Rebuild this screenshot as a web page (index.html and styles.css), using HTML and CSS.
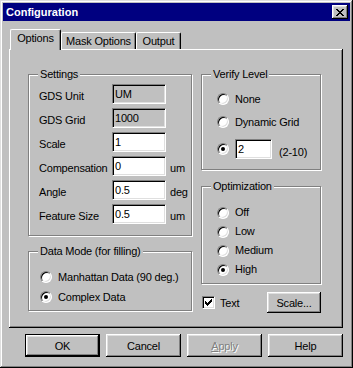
FILE: index.html
```html
<!DOCTYPE html>
<html lang="en">
<head>
<meta charset="UTF-8">
<title>Configuration</title>
<link rel="stylesheet" href="styles.css">
</head>
<body>
  <div class="window">
    <div class="titlebar">
      <span class="title">Configuration</span>
      <button class="close-btn" aria-label="Close">
        <svg width="8" height="7" viewBox="0 0 8 7"><path d="M0 0h2v1H0zM6 0h2v1H6zM1 1h2v1H1zM5 1h2v1H5zM2 2h4v1H2zM3 3h2v1H3zM2 4h4v1H2zM1 5h2v1H1zM5 5h2v1H5zM0 6h2v1H0zM6 6h2v1H6z" fill="#000"/></svg>
      </button>
    </div>

    <ul class="tabs">
      <li class="tab active tab-options">Options</li>
      <li class="tab tab-mask">Mask Options</li>
      <li class="tab tab-output">Output</li>
    </ul>

    <div class="panel">
      <div class="col-left">
        <div class="group settings">
          <div class="group-title">Settings</div>
          <div class="field-rows">
            <span class="label">GDS Unit</span><span class="edit readonly">UM</span><span></span>
            <span class="label">GDS Grid</span><span class="edit readonly">1000</span><span></span>
            <span class="label">Scale</span><span class="edit">1</span><span></span>
            <span class="label">Compensation</span><span class="edit">0</span><span class="unit">um</span>
            <span class="label">Angle</span><span class="edit">0.5</span><span class="unit">deg</span>
            <span class="label">Feature Size</span><span class="edit">0.5</span><span class="unit">um</span>
          </div>
        </div>

        <div class="group datamode">
          <div class="group-title">Data Mode (for filling)</div>
          <div class="radio-list mode-list">
            <div class="radio-row"><span class="radio"></span>Manhattan Data (90 deg.)</div>
            <div class="radio-row"><span class="radio checked"></span>Complex Data</div>
          </div>
        </div>
      </div>

      <div class="col-right">
        <div class="group verify">
          <div class="group-title">Verify Level</div>
          <div class="radio-list verify-list">
            <div class="radio-row"><span class="radio"></span>None</div>
            <div class="radio-row"><span class="radio"></span>Dynamic Grid</div>
            <div class="radio-row spin-row">
              <span class="radio checked"></span>
              <span class="edit level-edit">2</span>
              <span class="hint">(2-10)</span>
            </div>
          </div>
        </div>

        <div class="group optim">
          <div class="group-title">Optimization</div>
          <div class="radio-list opt-list">
            <div class="radio-row"><span class="radio"></span>Off</div>
            <div class="radio-row"><span class="radio"></span>Low</div>
            <div class="radio-row"><span class="radio"></span>Medium</div>
            <div class="radio-row"><span class="radio checked"></span>High</div>
          </div>
        </div>

        <div class="extras">
          <span class="checkbox">
            <svg width="7" height="7" viewBox="0 0 7 7"><path d="M6 0h1v1H6zM5 1h2v1H5zM0 2h1v1H0zM4 2h3v1H4zM0 3h2v1H0zM3 3h3v1H3zM0 4h5v1H0zM1 5h3v1H1zM2 6h1v1H2z" fill="#000"/></svg>
          </span>
          <span class="check-label">Text</span>
          <button class="btn scale-btn">Scale...</button>
        </div>
      </div>
    </div>

    <div class="buttons">
      <button class="btn default">OK</button>
      <button class="btn">Cancel</button>
      <button class="btn disabled"><span class="u">A</span>pply</button>
      <button class="btn">Help</button>
    </div>
  </div>
</body>
</html>
```

FILE: styles.css
```css
* {
  margin: 0;
  padding: 0;
  box-sizing: border-box;
}

body {
  background-color: #c0c0c0;
  font-family: "Liberation Sans", Arial, sans-serif;
  font-size: 11px;
  letter-spacing: -0.2px;
  color: #000;
}

.window {
  width: 353px;
  height: 368px;
  padding: 3px;
  background-color: #c0c0c0;
  box-shadow: inset -1px -1px 0 #000, inset 1px 1px 0 #dfdfdf, inset -2px -2px 0 #808080, inset 2px 2px 0 #fff;
}

/* title bar */

.titlebar {
  height: 18px;
  background-color: #000080;
  color: #fff;
  display: flex;
  align-items: center;
  justify-content: space-between;
  padding: 0 2px 0 3px;
}

.title {
  font-weight: bold;
  letter-spacing: 0;
}

.close-btn {
  width: 16px;
  height: 14px;
  border: none;
  background-color: #c0c0c0;
  display: flex;
  align-items: center;
  justify-content: center;
  box-shadow: inset -1px -1px 0 #000, inset 1px 1px 0 #fff, inset -2px -2px 0 #808080, inset 2px 2px 0 #dfdfdf;
}

.close-btn svg {
  display: block;
}

/* tabs */

.tabs {
  list-style: none;
  display: flex;
  align-items: flex-end;
  height: 20px;
  margin: 8px 0 0 7px;
  position: relative;
  z-index: 1;
}

.tab {
  height: 17px;
  padding-top: 2px;
  line-height: 13px;
  text-align: center;
  background-color: #c0c0c0;
  border-top: 1px solid #fff;
  border-left: 1px solid #fff;
  border-right: 1px solid #000;
  border-radius: 2px 2px 0 0;
  box-shadow: inset -1px 0 0 #808080;
}

.tab.active {
  height: 21px;
  margin-bottom: -1px;
}

.tab-options { width: 51px; }
.tab-mask { width: 75px; }
.tab-output { width: 45px; }

.panel {
  margin-left: 6px;
  width: 334px;
  height: 279px;
  padding: 25px 0 0 19px;
  display: flex;
  gap: 9px;
  box-shadow: inset -1px -1px 0 #000, inset 1px 1px 0 #fff, inset -2px -2px 0 #808080;
}

.col-left {
  width: 164px;
}

.col-right {
  width: 120px;
}

/* group boxes */

.group {
  border: 1px solid #808080;
  box-shadow: inset 1px 1px 0 #fff, 1px 1px 0 #fff;
}

.group-title {
  display: table;
  margin: -7px 0 0 9px;
  padding: 0 2px;
  line-height: 13px;
  background-color: #c0c0c0;
}

.settings {
  padding-bottom: 11px;
}

.field-rows {
  display: grid;
  grid-template-columns: 73px 54px auto;
  grid-auto-rows: 20px;
  row-gap: 4px;
  margin: 3px 0 0 10px;
}

.label,
.unit {
  padding-top: 6px;
  line-height: 13px;
  white-space: nowrap;
}

.unit {
  padding-left: 4px;
}

.edit {
  display: block;
  height: 20px;
  padding-left: 2px;
  line-height: 18px;
  background-color: #fff;
  border: 1px solid;
  border-color: #808080 #fff #fff #808080;
  box-shadow: inset 1px 1px 0 #000, inset -1px -1px 0 #dfdfdf;
}

.edit.readonly {
  background-color: #c0c0c0;
}

.datamode {
  margin-top: 15px;
  padding-bottom: 3px;
}

/* radios */

.radio-list {
  display: flex;
  flex-direction: column;
}

.radio-row {
  display: flex;
  align-items: center;
  gap: 6px;
  height: 20px;
  line-height: 13px;
  white-space: nowrap;
}

.radio {
  flex-shrink: 0;
  position: relative;
  width: 12px;
  height: 12px;
  border-radius: 50%;
  background-color: #fff;
  border: 1px solid;
  border-color: #808080 #fff #fff #808080;
  box-shadow: inset 1px 1px 0 #000, inset -1px -1px 0 #dfdfdf;
}

.radio.checked::after {
  content: "";
  position: absolute;
  left: 3px;
  top: 3px;
  width: 4px;
  height: 4px;
  border-radius: 50%;
  background-color: #000;
}

.mode-list {
  margin-top: 9px;
  padding-left: 11px;
}

.verify {
  padding-bottom: 10px;
}

.verify-list {
  margin-top: 8px;
  padding-left: 15px;
  gap: 3px;
}

.spin-row {
  margin-top: 4px;
  align-items: flex-start;
}

.spin-row .radio {
  margin-top: 4px;
}

.level-edit {
  width: 37px;
}

.hint {
  margin-left: 1px;
  padding-top: 7px;
}

.optim {
  margin-top: 16px;
  padding-bottom: 4px;
}

.opt-list {
  margin-top: 10px;
  padding-left: 15px;
}

.opt-list .radio-row {
  height: 19px;
}

/* checkbox + scale */

.extras {
  display: flex;
  align-items: center;
  height: 21px;
  margin-top: 8px;
}

.checkbox {
  width: 13px;
  height: 13px;
  margin-left: 1px;
  display: flex;
  align-items: center;
  justify-content: center;
  background-color: #fff;
  border: 1px solid;
  border-color: #808080 #fff #fff #808080;
  box-shadow: inset 1px 1px 0 #000, inset -1px -1px 0 #dfdfdf;
}

.checkbox svg {
  display: block;
}

.check-label {
  margin-left: 5px;
}

/* buttons */

.btn {
  width: 75px;
  height: 23px;
  border: none;
  background-color: #c0c0c0;
  color: #000;
  font: inherit;
  letter-spacing: inherit;
  box-shadow: inset -1px -1px 0 #000, inset 1px 1px 0 #fff, inset -2px -2px 0 #808080, inset 2px 2px 0 #dfdfdf;
}

.scale-btn {
  width: 54px;
  height: 21px;
  margin-left: auto;
}

.btn.default {
  box-shadow: inset 0 0 0 1px #000, inset -2px -2px 0 #000, inset 2px 2px 0 #fff, inset -3px -3px 0 #808080, inset 3px 3px 0 #dfdfdf;
}

.btn.disabled {
  color: #808080;
  text-shadow: 1px 1px 0 #fff;
}

.btn .u {
  text-decoration: underline;
}

.buttons {
  display: flex;
  justify-content: flex-end;
  gap: 6px;
  width: 334px;
  margin: 6px 0 0 6px;
}
```
